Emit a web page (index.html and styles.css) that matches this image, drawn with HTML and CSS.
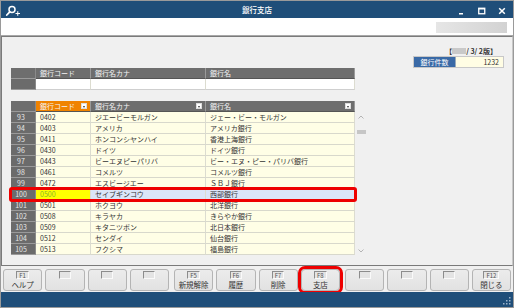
FILE: index.html
```html
<!DOCTYPE html>
<html lang="ja">
<head>
    <meta charset="UTF-8">
    <title>銀行支店</title>
    <link rel="stylesheet" href="styles.css">
</head>
<body>
<div class="window">
    <div class="titlebar">
        <svg class="app-icon" width="16" height="12" viewBox="0 0 16 12">
            <circle cx="7" cy="4.5" r="3" fill="none" stroke="#fff" stroke-width="1.5"/>
            <line x1="4.8" y1="6.8" x2="1.8" y2="10" stroke="#fff" stroke-width="1.8" stroke-linecap="round"/>
            <line x1="10.5" y1="8.5" x2="15" y2="8.5" stroke="#fff" stroke-width="1"/>
            <line x1="12.75" y1="6.2" x2="12.75" y2="10.8" stroke="#fff" stroke-width="1"/>
        </svg>
        <span class="title">銀行支店</span>
        <div class="controls">
            <svg width="8" height="8" viewBox="0 0 8 8"><rect x="1" y="6" width="4" height="1.5" fill="#fff"/></svg>
            <svg width="8" height="8" viewBox="0 0 8 8"><rect x="0.75" y="1.25" width="6" height="5.5" fill="none" stroke="#fff" stroke-width="1.3"/><rect x="0.5" y="1" width="6.5" height="1.5" fill="#fff"/></svg>
            <svg width="8" height="8" viewBox="0 0 8 8"><path d="M1.2 1.2 L6.8 6.8 M6.8 1.2 L1.2 6.8" stroke="#fff" stroke-width="1.5"/></svg>
        </div>
    </div>

    <div class="toolbar">
        <div class="search"></div>
    </div>

    <div class="main">
        <div class="meta">
            <div class="version">【<span class="blur"></span>/ 3/ 2版】</div>
            <div class="counter">
                <span class="counter-label">銀行件数</span>
                <span class="counter-value">1232</span>
            </div>
        </div>

        <div class="grid search-grid">
            <div class="cell head num"></div>
            <div class="cell head">銀行コード</div>
            <div class="cell head">銀行名カナ</div>
            <div class="cell head">銀行名</div>
            <div class="cell num"></div>
            <div class="cell input"></div>
            <div class="cell input"></div>
            <div class="cell input"></div>
        </div>

        <div class="list-wrap">
            <div class="grid list-grid" id="list">
                <div class="cell head num"></div>
                <div class="cell head sorted">銀行コード<span class="dd"></span></div>
                <div class="cell head">銀行名カナ<span class="dd"></span></div>
                <div class="cell head">銀行名<span class="dd"></span></div>
            </div>
            <div class="scroll">
                <svg class="arrow" width="6" height="4" viewBox="0 0 6 4"><path d="M0.5 3.5 L3 1 L5.5 3.5" fill="none" stroke="#b4b4b4" stroke-width="1"/></svg>
                <span class="thumb"></span>
                <svg class="arrow down" width="6" height="4" viewBox="0 0 6 4"><path d="M0.5 0.5 L3 3 L5.5 0.5" fill="none" stroke="#b4b4b4" stroke-width="1"/></svg>
            </div>
            <div class="highlight"></div>
        </div>
    </div>

    <div class="fkeys">
        <div class="fgroup">
            <button class="fkey"><span class="fno">F1</span><span class="flabel">ヘルプ</span></button>
            <button class="fkey"><span class="fno"></span><span class="flabel"></span></button>
            <button class="fkey"><span class="fno"></span><span class="flabel"></span></button>
            <button class="fkey"><span class="fno"></span><span class="flabel"></span></button>
        </div>
        <div class="fgroup">
            <button class="fkey"><span class="fno">F5</span><span class="flabel">新規解除</span></button>
            <button class="fkey"><span class="fno">F6</span><span class="flabel">履歴</span></button>
            <button class="fkey"><span class="fno">F7</span><span class="flabel">削除</span></button>
            <button class="fkey active"><span class="fno">F8</span><span class="flabel">支店</span></button>
        </div>
        <div class="fgroup">
            <button class="fkey"><span class="fno"></span><span class="flabel"></span></button>
            <button class="fkey"><span class="fno"></span><span class="flabel"></span></button>
            <button class="fkey"><span class="fno"></span><span class="flabel"></span></button>
            <button class="fkey"><span class="fno">F12</span><span class="flabel">閉じる</span></button>
        </div>
    </div>

    <div class="statusbar">
        <svg class="grip" width="8" height="8" viewBox="0 0 8 8">
            <rect x="6" y="0" width="1.5" height="1.5" fill="#9bb3cc"/>
            <rect x="3" y="3" width="1.5" height="1.5" fill="#9bb3cc"/>
            <rect x="6" y="3" width="1.5" height="1.5" fill="#9bb3cc"/>
            <rect x="0" y="6" width="1.5" height="1.5" fill="#9bb3cc"/>
            <rect x="3" y="6" width="1.5" height="1.5" fill="#9bb3cc"/>
            <rect x="6" y="6" width="1.5" height="1.5" fill="#9bb3cc"/>
        </svg>
    </div>
</div>

<script>
    const banks = [
        [93, "0402", "ジエービーモルガン", "ジェー・ビー・モルガン"],
        [94, "0403", "アメリカ", "アメリカ銀行"],
        [95, "0411", "ホンコンシヤンハイ", "香港上海銀行"],
        [96, "0430", "ドイツ", "ドイツ銀行"],
        [97, "0443", "ビーエヌピーパリバ", "ビー・エヌ・ピー・パリバ銀行"],
        [98, "0461", "コメルツ", "コメルツ銀行"],
        [99, "0472", "エスビージエー", "ＳＢＪ銀行"],
        [100, "0500", "セイブギンコウ", "西部銀行"],
        [101, "0501", "ホクヨウ", "北洋銀行"],
        [102, "0508", "キラヤカ", "きらやか銀行"],
        [103, "0509", "キタニツポン", "北日本銀行"],
        [104, "0512", "センダイ", "仙台銀行"],
        [105, "0513", "フクシマ", "福島銀行"]
    ];
    const selected = 100;

    let list = document.getElementById("list");
    banks.forEach(b => {
        let isSel = b[0] === selected;
        b.forEach((v, i) => {
            let cell = document.createElement("div");
            cell.className = "cell";
            if (i === 0) cell.className += " num";
            else if (isSel) cell.className += i === 1 ? " sel-code" : " sel";
            cell.innerText = v;
            list.appendChild(cell);
        });
    });
</script>
</body>
</html>
```

FILE: styles.css
```css
* {
    box-sizing: border-box;
}
body {
    margin: 0;
    font-family: "Noto Sans CJK JP", "Noto Sans", sans-serif;
    color: #333;
}
.window {
    width: 514px;
    height: 308px;
    border: 1px solid #9a9a9a;
    display: flex;
    flex-direction: column;
    background: #f0f0f0;
    overflow: hidden;
}
.titlebar {
    height: 17px;
    background: #1f4e79;
    display: flex;
    align-items: center;
    position: relative;
    flex-shrink: 0;
}
.app-icon {
    margin-left: 4px;
    margin-top: 2px;
}
.title {
    position: absolute;
    left: 0;
    right: 0;
    text-align: center;
    color: #fff;
    font-size: 7.5px;
    font-weight: 500;
    line-height: 17px;
    pointer-events: none;
}
.controls {
    margin-left: auto;
    display: flex;
    gap: 12px;
    margin-right: 7px;
    margin-top: 2px;
}
.toolbar {
    height: 18px;
    background: #fff;
    border-bottom: 1px solid #a8a8a8;
    display: flex;
    align-items: center;
    justify-content: flex-end;
    padding-right: 6px;
    flex-shrink: 0;
}
.search {
    width: 71px;
    height: 11px;
    margin-top: 1px;
    background: linear-gradient(to right, #e6e6e6, #d2d2d2);
}
.main {
    flex: 1;
    border: 1px solid #7a7a7a;
    border-right-color: #c8c8c8;
    padding: 9px 8px 0 9px;
    background: #f0f0f0;
}
.meta {
    display: flex;
    flex-direction: column;
    align-items: flex-end;
    height: 22px;
}
.version {
    font-size: 7px;
    line-height: 10px;
    height: 10px;
    margin-right: 7px;
    color: #333;
    font-weight: bold;
}
.blur {
    display: inline-block;
    width: 14px;
    height: 6px;
    background: #c9c9c9;
    vertical-align: 0;
}
.counter {
    display: flex;
    height: 12px;
    border: 1px solid #c8c8c8;
    font-size: 7px;
    line-height: 10px;
}
.counter-label {
    width: 42px;
    background: #3a6aa6;
    color: #fff;
    text-align: center;
    border-right: 1px solid #9ab;
}
.counter-value {
    width: 47px;
    background: #fffde4;
    text-align: right;
    padding-right: 4px;
    color: #333;
}
.grid {
    display: grid;
    grid-template-columns: 25px 55px 115px 149px;
    width: 344px;
}
.cell {
    height: 11px;
    font-size: 7px;
    line-height: 10px;
    padding-left: 4px;
    white-space: nowrap;
    overflow: hidden;
    background: #fffee6;
    border-right: 1px solid #dcdcd0;
    border-bottom: 1px solid #d8d8cc;
}
.cell.head {
    background: #6e6e6e;
    color: #f4f4f4;
    border-right: 1px solid #9a9a9a;
    border-bottom: 1px solid #555;
    display: flex;
    align-items: center;
    justify-content: space-between;
    padding-right: 3px;
}
.cell.head.sorted {
    background: #f08300;
}
.cell.num {
    background: #6b6b6b;
    color: #e6e6e6;
    text-align: center;
    padding-left: 0;
    padding-right: 4px;
    border-right: 1px solid #8a8a8a;
    border-bottom: 1px solid #9a9a9a;
}
.cell.head.num {
    background: #6e6e6e;
}
.cell.input {
    background: #fff;
    border-bottom: 1px solid #cfcfcf;
}
.cell.sel {
    background: #dbe5f8;
}
.cell.sel-code {
    background: #ffff00;
    color: #86b52e;
}
.dd {
    width: 6px;
    height: 6px;
    background: #fff;
    border: 1px solid #ddd;
    position: relative;
}
.dd::after {
    content: "";
    position: absolute;
    left: 1px;
    top: 1.5px;
    border-left: 1.5px solid transparent;
    border-right: 1.5px solid transparent;
    border-top: 2px solid #333;
}
.list-wrap {
    position: relative;
    margin-top: 11px;
    display: flex;
}
.scroll {
    width: 10px;
    margin-left: 1px;
    height: 154px;
    display: flex;
    flex-direction: column;
    align-items: center;
    padding-top: 14px;
}
.arrow {
    flex-shrink: 0;
}
.thumb {
    width: 9px;
    height: 4px;
    background: #c6c6c6;
    margin-top: 11px;
}
.arrow.down {
    margin-top: auto;
    margin-bottom: 2px;
}
.highlight {
    position: absolute;
    left: -2px;
    top: 86px;
    width: 348px;
    height: 15px;
    border: 3px solid #ee0000;
    border-radius: 3px;
}
.fkeys {
    height: 26px;
    display: flex;
    gap: 5px;
    padding: 3px 2px 1px 2px;
    flex-shrink: 0;
}
.fgroup {
    flex: 1;
    display: flex;
    gap: 3px;
}
.fkey {
    flex: 1;
    height: 22px;
    padding: 0;
    margin: 0;
    background: linear-gradient(#ececec, #e2e2e2);
    border: 1px solid #b4b4b4;
    border-radius: 3px;
    display: flex;
    flex-direction: column;
    align-items: center;
    font-family: inherit;
}
.fkey.active {
    outline: 3px solid #ee0000;
    outline-offset: 0;
    border-radius: 4px;
}
.fno {
    margin-top: 1px;
    min-width: 12px;
    height: 8px;
    padding: 0 2px;
    font-size: 6px;
    line-height: 7px;
    color: #555;
    border-top: 1px solid #8c8c8c;
    border-left: 1px solid #8c8c8c;
    border-bottom: 1px solid #fafafa;
    border-right: 1px solid #fafafa;
    background: #e4e4e4;
}
.flabel {
    font-size: 7.5px;
    line-height: 11px;
    color: #333;
}
.statusbar {
    height: 15px;
    background: #1f4e79;
    display: flex;
    justify-content: flex-end;
    align-items: flex-end;
    padding: 0 2px 2px 0;
    flex-shrink: 0;
}
```
